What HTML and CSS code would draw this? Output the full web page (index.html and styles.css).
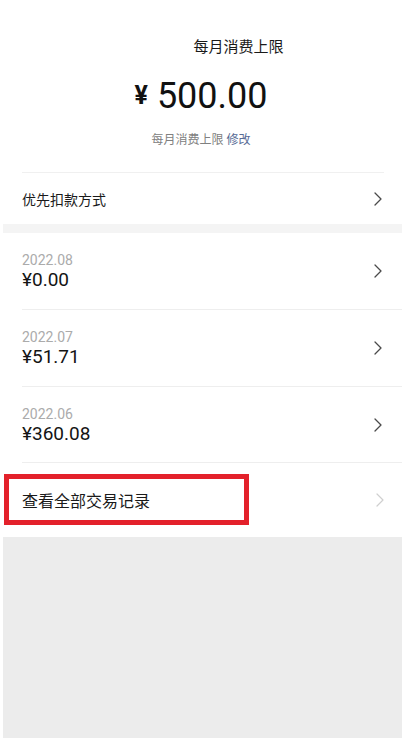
FILE: index.html
```html
<!DOCTYPE html>
<html lang="zh-CN">
<head>
<meta charset="utf-8">
<meta name="viewport" content="width=402">
<title>每月消费上限</title>
<link rel="stylesheet" href="styles.css">
</head>
<body>
<div class="page">
  <section class="header">
    <div class="title">每月消费上限</div>
    <div class="amount"><span class="yen">¥</span><span class="num">500.00</span></div>
    <div class="sub">每月消费上限 <span class="link">修改</span></div>
  </section>
  <div class="divider-top"></div>
  <div class="pay-row">
    <span class="pay-label">优先扣款方式</span>
    <svg class="chev" width="8" height="14" viewBox="0 0 8 14"><path d="M1 1 L7 7 L1 13" fill="none" stroke="#4a4a4a" stroke-width="1.3" stroke-linecap="round" stroke-linejoin="round"/></svg>
  </div>
  <div class="strip"></div>
  <section class="months">
    <div class="month-row tall">
      <div class="month-info">
        <div class="date">2022.08</div>
        <div class="sum">¥0.00</div>
      </div>
      <svg class="chev" width="8" height="14" viewBox="0 0 8 14"><path d="M1 1 L7 7 L1 13" fill="none" stroke="#4a4a4a" stroke-width="1.3" stroke-linecap="round" stroke-linejoin="round"/></svg>
    </div>
    <div class="month-row tall">
      <div class="month-info">
        <div class="date">2022.07</div>
        <div class="sum">¥51.71</div>
      </div>
      <svg class="chev" width="8" height="14" viewBox="0 0 8 14"><path d="M1 1 L7 7 L1 13" fill="none" stroke="#4a4a4a" stroke-width="1.3" stroke-linecap="round" stroke-linejoin="round"/></svg>
    </div>
    <div class="month-row">
      <div class="month-info">
        <div class="date">2022.06</div>
        <div class="sum">¥360.08</div>
      </div>
      <svg class="chev" width="8" height="14" viewBox="0 0 8 14"><path d="M1 1 L7 7 L1 13" fill="none" stroke="#4a4a4a" stroke-width="1.3" stroke-linecap="round" stroke-linejoin="round"/></svg>
    </div>
    <div class="all-row">
      <span class="all-label">查看全部交易记录</span>
      <svg class="chev light" width="8" height="14" viewBox="0 0 8 14"><path d="M1 1 L7 7 L1 13" fill="none" stroke="#cfcfcf" stroke-width="1.2" stroke-linecap="round" stroke-linejoin="round"/></svg>
      <div class="highlight"></div>
    </div>
  </section>
  <div class="bottom"></div>
</div>
</body>
</html>
```

FILE: styles.css
```css
html, body {
  margin: 0;
  padding: 0;
  background: #ffffff;
}

body {
  font-family: Roboto, "Noto Sans CJK SC", "Noto Sans", sans-serif;
  color: #191919;
}

.page {
  width: 402px;
  min-height: 738px;
  display: flex;
  flex-direction: column;
}

.header {
  padding-top: 37px;
  display: flex;
  flex-direction: column;
  align-items: center;
}

.title {
  font-size: 15px;
  line-height: 20px;
  padding-left: 75px;
  color: #1a1a1a;
}

.amount {
  margin-top: 17px;
  height: 44px;
  display: flex;
  align-items: center;
  gap: 9px;
}

.yen {
  font-size: 25px;
  font-weight: 700;
  line-height: 44px;
  color: #111;
}

.num {
  font-size: 36px;
  line-height: 44px;
  color: #111;
}

.sub {
  margin-top: 14px;
  font-size: 12px;
  line-height: 16px;
  color: #808080;
}

.link {
  color: #576b95;
}

.divider-top {
  margin: 24px 18px 0 22px;
  height: 1px;
  background: #f0f0f0;
}

.pay-row {
  height: 51px;
  padding: 0 20px 0 22px;
  display: flex;
  align-items: center;
  justify-content: space-between;
}

.pay-label {
  font-size: 14px;
  color: #1a1a1a;
}

.chev {
  display: block;
  flex: none;
}

.strip {
  margin-left: 3px;
  height: 9px;
  background: #f4f4f4;
}

.months {
  padding-left: 22px;
}

.month-row {
  height: 76px;
  box-sizing: border-box;
  border-bottom: 1px solid #eeeeee;
  padding-right: 20px;
  display: flex;
  align-items: center;
  justify-content: space-between;
}

.month-row.tall {
  height: 77px;
}

.month-info {
  display: flex;
  flex-direction: column;
}

.date {
  font-size: 14px;
  line-height: 18px;
  color: #ababab;
}

.sum {
  font-size: 19px;
  line-height: 22px;
  color: #141414;
}

.all-row {
  position: relative;
  height: 74px;
  padding-right: 18px;
  display: flex;
  align-items: center;
  justify-content: space-between;
}

.all-label {
  font-size: 16px;
  color: #1a1a1a;
}

.highlight {
  position: absolute;
  left: -18px;
  top: 11px;
  width: 245px;
  height: 51px;
  box-sizing: border-box;
  border: 5px solid #e3212b;
}

.bottom {
  flex: 1;
  margin-left: 3px;
  background: #ececec;
}
```
